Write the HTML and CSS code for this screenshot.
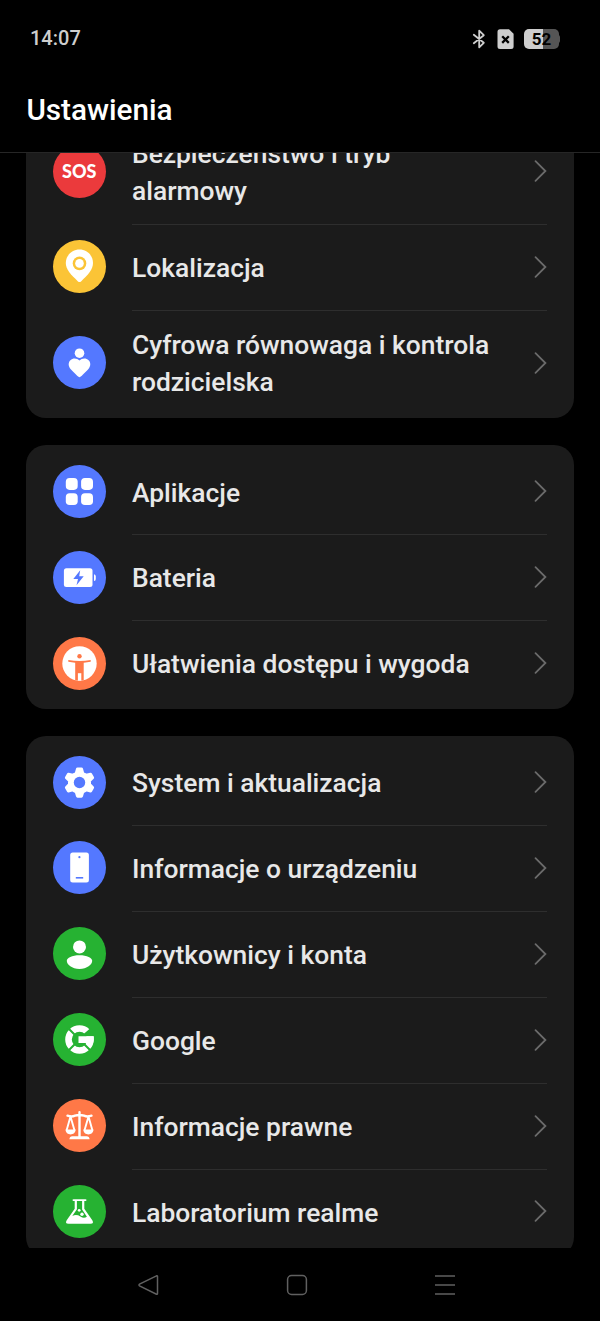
FILE: index.html
```html
<!DOCTYPE html>
<html lang="pl">
<head>
    <meta charset="UTF-8">
    <meta name="viewport" content="width=device-width, initial-scale=1.0">
    <title>Ustawienia</title>
    <link rel="stylesheet" href="styles.css">
</head>
<body>
    <!-- Status bar -->
    <div class="status-bar">
        <span class="time">14:07</span>
        <div class="status-icons">
            <svg class="bluetooth" width="14" height="22" viewBox="0 0 14 22" fill="none" stroke="#cecece" stroke-width="1.8" stroke-linejoin="round" stroke-linecap="round"><path d="M1.800 6.700 11.800 14.800 7.200 19.300V2.700L11.800 7.200 1.800 15.300"/></svg>
            <svg class="sim" width="17" height="21" viewBox="0 0 17 21"><path d="M3 .3h9l4.600 4.500v12.600a2.500 2.500 0 0 1-2.500 2.500H3A2.500 2.500 0 0 1 .5 17.400V2.800A2.500 2.500 0 0 1 3 .3z" fill="#cecece"/><path d="M5.200 7.300l6.600 6.600M11.800 7.300l-6.600 6.600" stroke="#000" stroke-width="2.300"/></svg>
            <div class="battery">52</div>
        </div>
    </div>

    <header class="header">
        <h1>Ustawienia</h1>
    </header>

    <main class="content">
        <div class="list">
            <section class="card">
                <div class="row tall">
                    <span class="icon red">SOS</span>
                    <div class="label">Bezpieczeństwo i tryb alarmowy</div>
                    <svg class="chevron" viewBox="0 0 14 24"><path d="M2.500 2.200 12.400 12 2.500 21.800"/></svg>
                </div>
                <div class="row">
                    <span class="icon yellow"><svg viewBox="0 0 53 53"><path d="M26.500 9.500C19 9.500 12.800 15.400 12.800 23c0 6.500 4.800 11.300 12.200 18.400q1.500 1.400 3 0C35.400 34.300 40 29.500 40 23c0-7.600-6-13.500-13.500-13.500z"/><circle class="cut" cx="26.500" cy="23.400" r="6.800"/><circle cx="26.500" cy="23.400" r="4.300"/></svg></span>
                    <div class="label">Lokalizacja</div>
                    <svg class="chevron" viewBox="0 0 14 24"><path d="M2.500 2.200 12.400 12 2.500 21.800"/></svg>
                </div>
                <div class="row tall">
                    <span class="icon blue"><svg viewBox="0 0 53 53"><circle cx="26.500" cy="17.200" r="4.800"/><path d="M26.500 41.200c-1 0-5.500-4.700-8.500-7.800-3.200-3.400-2.700-7.200-.6-9.200 2.600-2.500 6.700-2.100 9.100.3 2.400-2.400 6.500-2.800 9.100-.3 2.100 2 2.600 5.800-.6 9.200-3 3.100-7.500 7.800-8.500 7.800z"/></svg></span>
                    <div class="label">Cyfrowa równowaga i kontrola rodzicielska</div>
                    <svg class="chevron" viewBox="0 0 14 24"><path d="M2.500 2.200 12.400 12 2.500 21.800"/></svg>
                </div>
            </section>

            <section class="card">
                <div class="row">
                    <span class="icon blue"><svg viewBox="0 0 53 53"><rect x="12.800" y="13" width="11.900" height="11.900" rx="3.800"/><rect x="28.100" y="13" width="11.900" height="11.900" rx="3.800"/><rect x="12.800" y="28.200" width="11.900" height="11.900" rx="3.800"/><rect x="28.100" y="28.200" width="11.900" height="11.900" rx="3.800"/></svg></span>
                    <div class="label">Aplikacje</div>
                    <svg class="chevron" viewBox="0 0 14 24"><path d="M2.500 2.200 12.400 12 2.500 21.800"/></svg>
                </div>
                <div class="row">
                    <span class="icon blue"><svg viewBox="0 0 53 53"><rect x="10.900" y="17.200" width="28.600" height="18.800" rx="2.500"/><path d="M41 23.200q1.800.2 1.800 2.200v2.500q0 2-1.800 2.200z"/><path class="cut" d="M27.200 19.300l-6.900 8.800h4.700l-1.500 6.200 7.200-9h-4.500z"/></svg></span>
                    <div class="label">Bateria</div>
                    <svg class="chevron" viewBox="0 0 14 24"><path d="M2.500 2.200 12.400 12 2.500 21.800"/></svg>
                </div>
                <div class="row">
                    <span class="icon orange"><svg viewBox="0 0 53 53"><circle cx="26.500" cy="26.500" r="17.200"/><circle class="cut" cx="26.500" cy="19.300" r="2.200"/><path class="cut" d="M15.300 23q11.200 2 22.400 0v1.800l-7 1V43.500h-8.500V25.800l-6.900-1z"/><path d="M24.900 36.200h3.400v7.500h-3.400z"/></svg></span>
                    <div class="label">Ułatwienia dostępu i wygoda</div>
                    <svg class="chevron" viewBox="0 0 14 24"><path d="M2.500 2.200 12.400 12 2.500 21.800"/></svg>
                </div>
            </section>

            <section class="card">
                <div class="row">
                    <span class="icon blue"><svg viewBox="0 0 53 53"><g stroke="#fff" stroke-width="3" stroke-linejoin="round"><path d="M24.500 13h4l1.200 4.200 3.600 2.100 4.300-1.100 2 3.500-3.100 3.100v3.600l3.100 3.100-2 3.500-4.300-1.100-3.600 2.100-1.200 4.200h-4l-1.200-4.200-3.600-2.100-4.300 1.100-2-3.500 3.100-3.100v-3.600l-3.100-3.100 2-3.500 4.300 1.100 3.600-2.100z"/></g><circle class="cut" cx="26.500" cy="26.500" r="5.700"/></svg></span>
                    <div class="label">System i aktualizacja</div>
                    <svg class="chevron" viewBox="0 0 14 24"><path d="M2.500 2.200 12.400 12 2.500 21.800"/></svg>
                </div>
                <div class="row">
                    <span class="icon blue"><svg viewBox="0 0 53 53"><rect x="17.200" y="11.500" width="18.700" height="30" rx="2.500"/><circle class="cut" cx="26.400" cy="16.200" r="1.100"/><rect class="cut" x="22.800" y="36" width="7.400" height="1.600"/></svg></span>
                    <div class="label">Informacje o urządzeniu</div>
                    <svg class="chevron" viewBox="0 0 14 24"><path d="M2.500 2.200 12.400 12 2.500 21.800"/></svg>
                </div>
                <div class="row">
                    <span class="icon green"><svg viewBox="0 0 53 53"><circle cx="26.500" cy="19.900" r="6.500"/><path d="M26.500 28.200c7.500 0 12.700 2.600 12.700 5.600 0 4-5.200 8.100-12.700 8.100s-12.700-4.100-12.700-8.100c0-3 5.200-5.600 12.700-5.600z"/></svg></span>
                    <div class="label">Użytkownicy i konta</div>
                    <svg class="chevron" viewBox="0 0 14 24"><path d="M2.500 2.200 12.400 12 2.500 21.800"/></svg>
                </div>
                <div class="row">
                    <span class="icon green"><svg viewBox="0 0 53 53"><circle cx="26.500" cy="26.500" r="11" fill="none" stroke="#fff" stroke-width="6.600"/><path class="cut" d="M28 23.200 37 15.500 43 18v5.200z"/><path d="M25.500 23.200h15.300q.3 3.500-.7 6.800H25.500z"/><path class="cut-line" d="M22 22 14.500 14.500M22 31 14.500 38.500M31 31 38.500 38.500"/></svg></span>
                    <div class="label">Google</div>
                    <svg class="chevron" viewBox="0 0 14 24"><path d="M2.500 2.200 12.400 12 2.500 21.800"/></svg>
                </div>
                <div class="row">
                    <span class="icon orange"><svg viewBox="0 0 53 53"><g fill="none" stroke="#fff" stroke-width="1.900" stroke-linecap="round" stroke-linejoin="round"><path d="M14.500 16.700q4 1.500 7.500 0 4.500-1.500 9 0 3.500 1.500 7.500 0M26.500 13.200v25.300" stroke-width="2.400"/><path d="M17.500 17.500 13.700 31M17.500 17.500 21.400 31M35.500 17.500 31.600 31M35.500 17.500 39.300 31"/></g><path d="M12.600 30.500h10c0 6.500-10 6.500-10 0zM30.400 30.500h10c0 6.500-10 6.500-10 0zM16.400 40.300q.2-3 3-3h14.200q2.800 0 3 3z"/></svg></span>
                    <div class="label">Informacje prawne</div>
                    <svg class="chevron" viewBox="0 0 14 24"><path d="M2.500 2.200 12.400 12 2.500 21.800"/></svg>
                </div>
                <div class="row">
                    <span class="icon green"><svg viewBox="0 0 53 53"><path d="M20.500 14.200h12q1 0 1 .9t-1 .9h-1.200v7.700l8 11.600q2 3.500-1.800 3.500h-22q-3.800 0-1.800-3.500l8-11.600V16h-1.200q-1 0-1-.9t1-.9z"/><path class="cut" d="M23.900 16h5.200v8.500l4.800 7.300q-3 2.200-6.500-.3-4-2.500-8.100-.5l4.600-6.800z"/><circle cx="26.200" cy="25.300" r="1.400"/><circle cx="29" cy="29.300" r="1.700"/></svg></span>
                    <div class="label">Laboratorium realme</div>
                    <svg class="chevron" viewBox="0 0 14 24"><path d="M2.500 2.200 12.400 12 2.500 21.800"/></svg>
                </div>
            </section>
        </div>
    </main>

    <!-- Navigation buttons -->
    <nav class="nav-bar">
        <svg viewBox="0 0 22 22"><path d="M19.500 1.800 2.500 10.200q-1 .8 0 1.600l17 8.400q1 .3 1-.8V2.600q0-1.100-1-.8z"/></svg>
        <svg viewBox="0 0 22 22"><rect x="1.600" y="1.600" width="18.800" height="18.800" rx="4"/></svg>
        <svg viewBox="0 0 22 22"><path d="M1 1.900h20M1 11h20M1 20.100h20"/></svg>
    </nav>
</body>
</html>
```

FILE: styles.css
```css
* {
    margin: 0;
    padding: 0;
    box-sizing: border-box;
}

body {
    width: 600px;
    height: 1321px;
    display: flex;
    flex-direction: column;
    background-color: #000;
    color: #e8e8e8;
    font-family: Roboto, "Noto Sans", sans-serif;
    font-weight: 500;
    overflow: hidden;
}

/* Status bar */
.status-bar {
    height: 76px;
    padding: 0 40px 0 30px;
    display: flex;
    align-items: center;
    justify-content: space-between;
}

.time {
    color: #cecece;
    font-size: 20px;
}

.status-icons {
    display: flex;
    align-items: center;
    padding-top: 2px;
}

.sim {
    margin: 0 10px 0 11px;
}

.battery {
    width: 35px;
    height: 20px;
    margin-right: 1px;
    position: relative;
    border-radius: 5px;
    background: linear-gradient(to right, #cecece 19.5px, #555 19.5px);
    color: #000;
    font-size: 17px;
    font-weight: 700;
    line-height: 20px;
    text-align: center;
}

.battery::after {
    content: "";
    position: absolute;
    top: 6px;
    right: -1px;
    width: 2px;
    height: 8px;
    border-radius: 0 2px 2px 0;
    background-color: #555;
}

.header {
    height: 77px;
    padding: 15px 26.4px 0;
    border-bottom: 1px solid #262626;
}

.header h1 {
    color: #fff;
    font-size: 29.7px;
    font-weight: 500;
    line-height: 38px;
}

/* Settings list */
.content {
    height: 1095px;
    overflow: hidden;
}

.list {
    margin-top: -37.7px;
    padding: 0 26.4px;
}

.card {
    margin-bottom: 27px;
    padding: 3px 26.4px;
    background-color: #1b1b1b;
    border-radius: 20px;
}

.row {
    height: 85.9px;
    display: flex;
    align-items: center;
    position: relative;
}

.row.tall {
    height: 105.6px;
}

.row + .row::before {
    content: "";
    position: absolute;
    top: 0;
    left: 79px;
    right: 0;
    height: 1px;
    background-color: #2e2e2e;
}

.icon {
    width: 53px;
    height: 53px;
    flex: none;
    display: flex;
    align-items: center;
    justify-content: center;
    border-radius: 50%;
    background-color: var(--tone);
    color: #fff;
    font-family: Lato, sans-serif;
    font-size: 18px;
    font-weight: 900;
}

.icon svg {
    width: 53px;
    height: 53px;
    fill: #fff;
}

.icon .cut {
    fill: var(--tone);
}

.icon .cut-line {
    stroke: var(--tone);
    stroke-width: 2;
}

.red { --tone: #eb3a3c; }
.yellow { --tone: #fbc436; }
.blue { --tone: #5478ff; }
.orange { --tone: #ff7847; }
.green { --tone: #26b232; }

.label {
    flex: 1;
    padding: 3.4px 32px 0 26.2px;
    font-size: 26.4px;
    line-height: 37px;
}

.chevron {
    width: 14px;
    height: 24px;
    fill: none;
    stroke: #6b6b6b;
    stroke-width: 1.8;
    stroke-linecap: round;
}

/* Navigation bar */
.nav-bar {
    height: 73px;
    padding: 0 144px 0 137px;
    display: flex;
    align-items: center;
    justify-content: space-between;
}

.nav-bar svg {
    width: 22px;
    height: 22px;
    fill: none;
    stroke: #606060;
    stroke-width: 1.5;
}
```
